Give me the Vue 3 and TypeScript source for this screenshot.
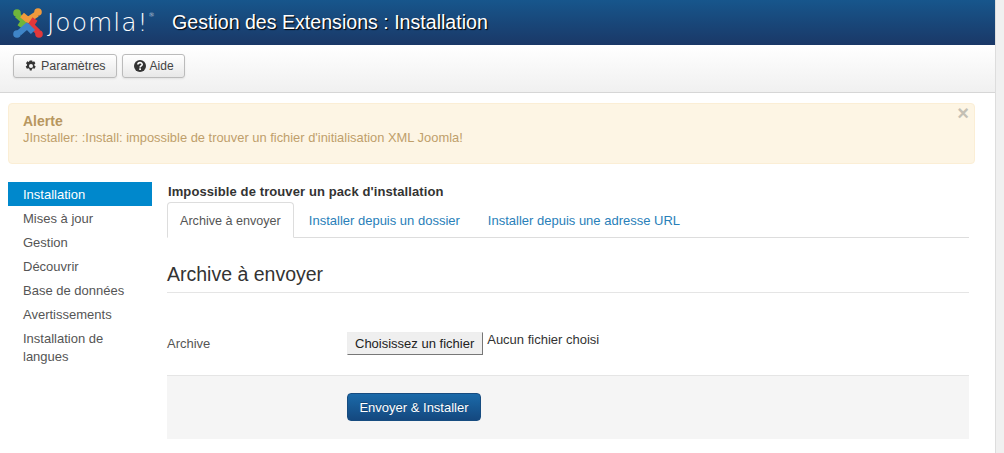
<script setup lang="ts">
import { ref } from 'vue'

const sideItems = ref(['Installation', 'Mises à jour', 'Gestion', 'Découvrir', 'Base de données', 'Avertissements', 'Installation de langues'])
const tabs = ref(['Archive à envoyer', 'Installer depuis un dossier', 'Installer depuis une adresse URL'])
</script>

<template>
  <div class="page">
    <div class="body-col">
      <header class="topbar">
        <div class="brand">
          <svg class="logo" viewBox="0 0 32 32" width="32" height="32">
            <path d="M5 8 L12 14 L8 20" fill="none" stroke="#6fb53c" stroke-width="6" stroke-linejoin="round" />
            <path d="M25 7 L16 13 L10 8" fill="none" stroke="#f09a3c" stroke-width="6" stroke-linejoin="round" />
            <path d="M26 25 L19 18 L23 12" fill="none" stroke="#e2383a" stroke-width="6" stroke-linejoin="round" />
            <path d="M7 26 L15 19 L21 25" fill="none" stroke="#3f85c8" stroke-width="6" stroke-linejoin="round" />
            <circle cx="5" cy="6" r="3.8" fill="#6fb53c" />
            <circle cx="26" cy="5" r="3.8" fill="#f09a3c" />
            <circle cx="27" cy="27" r="3.8" fill="#e2383a" />
            <circle cx="5" cy="27" r="3.8" fill="#3f85c8" />
          </svg>
          <span class="wordmark">Joomla!<sup>®</sup></span>
        </div>
        <h1 class="page-title">Gestion des Extensions : Installation</h1>
      </header>

      <div class="toolbar">
        <button class="tool-btn settings">
          <svg viewBox="0 0 12 12" width="12" height="12">
            <path fill-rule="evenodd" fill="#333" d="M4.8.4h2.4l.4 1.5 1.5-.6 1.3 2-1.1 1.1.1 1.2 1.3 1-1.2 2.2-1.6-.5-1 .8-.2 1.5H4.8l-.3-1.5-1-.8-1.6.5L.7 6.6 2 5.6l.1-1.2L1 3.3l1.3-2 1.5.6zM6 4a2 2 0 100 4 2 2 0 000-4z" />
          </svg>
          Paramètres
        </button>
        <button class="tool-btn help">
          <svg viewBox="0 0 12 12" width="12" height="12">
            <circle cx="6" cy="6" r="6" fill="#333" />
            <path d="M3.9 4.6c0-2.6 4.3-2.6 4.3-.1 0 1.4-2.1 1.5-2.1 2.9" fill="none" stroke="#fff" stroke-width="1.6" />
            <rect x="5.2" y="8.3" width="1.8" height="1.7" fill="#fff" />
          </svg>
          Aide
        </button>
      </div>

      <div class="alert">
        <span class="alert-close">×</span>
        <h4 class="alert-title">Alerte</h4>
        <p class="alert-text">JInstaller: :Install: impossible de trouver un fichier d'initialisation XML Joomla!</p>
      </div>

      <div class="main">
        <nav class="sidebar">
          <a v-for="(item, i) in sideItems" :key="item" class="side-link" :class="{ active: i === 0 }">{{ item }}</a>
        </nav>

        <section class="content">
          <div class="pack-title">Impossible de trouver un pack d'installation</div>
          <ul class="tabs">
            <li v-for="(tab, i) in tabs" :key="tab" class="tab" :class="{ active: i === 0 }">{{ tab }}</li>
          </ul>
          <h2 class="legend">Archive à envoyer</h2>
          <div class="field">
            <label class="field-label">Archive</label>
            <div class="file-input">
              <span class="file-btn">Choisissez un fichier</span>
              <span class="file-name">Aucun fichier choisi</span>
            </div>
          </div>
          <div class="actions">
            <button class="submit">Envoyer &amp; Installer</button>
          </div>
        </section>
      </div>
    </div>
    <div class="scrollbar"></div>
  </div>
</template>

<style>
html, body { margin: 0; background: #fff; overflow: hidden; }
</style>

<style scoped>
.page {
  display: flex;
  width: 1004px;
  height: 453px;
  overflow: hidden;
  font-family: "Liberation Sans", Arial, sans-serif;
  font-size: 13px;
  color: #555;
}
.body-col { width: 995px; flex: none; }
.topbar {
  height: 45px;
  display: flex;
  align-items: center;
  background: linear-gradient(#17568c, #1a3867);
}
.brand {
  display: flex;
  align-items: center;
  margin-left: 12px;
  width: 160px;
}
.logo { flex: none; }
.wordmark {
  margin-left: 3px;
  font-family: "DejaVu Sans", "Liberation Sans", sans-serif;
  font-size: 25px;
  font-weight: 200;
  color: #fff;
  letter-spacing: 1px;
  white-space: nowrap;
}
.wordmark sup { font-size: 6px; vertical-align: 14px; letter-spacing: 0; }
.page-title {
  margin: 0;
  font-size: 19.6px;
  font-weight: 400;
  color: #fff;
  text-shadow: 1px 1px 1px #000;
}
.toolbar {
  box-sizing: border-box;
  height: 48px;
  display: flex;
  align-items: flex-start;
  gap: 5px;
  padding: 9px 0 0 13px;
  background: linear-gradient(#fff, #f0f0f0);
  border-bottom: 1px solid #d6d6d6;
}
.tool-btn {
  height: 24px;
  display: flex;
  align-items: center;
  gap: 4px;
  padding: 0 10px 0 11px;
  font: inherit;
  color: #444;
  background: linear-gradient(#fff, #e8e8e8);
  border: 1px solid #bbb;
  border-radius: 3px;
  box-shadow: 0 1px 2px rgba(0, 0, 0, 0.08);
}
.tool-btn.settings { font-size: 12.5px; }
.tool-btn.help { font-size: 12px; }
.alert {
  position: relative;
  box-sizing: border-box;
  width: 967px;
  height: 61px;
  margin: 10px 0 0 8px;
  padding: 9px 14px;
  background: #fdf5e4;
  border: 1px solid #fbeed5;
  border-radius: 4px;
  color: #bf9f6b;
}
.alert-close {
  position: absolute;
  top: 0;
  right: 5px;
  font-size: 20px;
  font-weight: 700;
  line-height: 18px;
  color: #c4c0b4;
}
.alert-title { margin: 0; font-size: 14px; line-height: 16px; color: #b8975f; }
.alert-text { margin: 0; font-size: 12.9px; line-height: 18px; }
.main {
  display: flex;
  margin: 18px 0 0 8px;
}
.sidebar {
  width: 144px;
  flex: none;
  display: flex;
  flex-direction: column;
}
.side-link {
  padding: 4px 15px 2px;
  line-height: 18px;
  color: #555;
}
.side-link.active { background: #0088cc; color: #fff; }
.content {
  box-sizing: border-box;
  width: 802px;
  margin-left: 15px;
}
.pack-title {
  padding-left: 1px;
  font-size: 13px;
  font-weight: 700;
  letter-spacing: 0.1px;
  line-height: 19px;
  color: #333;
}
.tabs {
  display: flex;
  margin: 1px 0 0;
  padding: 0;
  list-style: none;
  border-bottom: 1px solid #ddd;
}
.tab {
  padding: 9px 13px 7px;
  line-height: 18px;
  color: #2980b9;
  margin-bottom: -1px;
  border: 1px solid transparent;
}
.tab.active {
  padding: 9px 12px 7px;
  margin-right: 1px;
  font-size: 12.6px;
  color: #555;
  background: #fff;
  border-color: #ddd #ddd #fff;
  border-radius: 4px 4px 0 0;
}
.legend {
  margin: 23px 0 0;
  padding-bottom: 4px;
  font-size: 19.5px;
  font-weight: 400;
  line-height: 27px;
  color: #333;
  border-bottom: 1px solid #e5e5e5;
}
.field {
  display: flex;
  align-items: center;
  margin-top: 39px;
  height: 22px;
}
.field-label { width: 180px; }
.file-input { display: flex; align-items: flex-start; gap: 4px; color: #333; }
.file-btn {
  padding: 2px 8px 2px 7px;
  line-height: 17px;
  background: #efefef;
  border: 1px solid;
  border-color: #eee #777 #777 #eee;
  color: #222;
}
.actions {
  box-sizing: border-box;
  height: 64px;
  margin-top: 21px;
  padding: 17px 0 0 180px;
  background: #f5f5f5;
  border-top: 1px solid #e5e5e5;
}
.submit {
  height: 28px;
  width: 134px;
  padding: 0;
  font: inherit;
  color: #fff;
  background: linear-gradient(#1b6aa9, #14487f);
  border: 1px solid #174c80;
  border-radius: 4px;
  text-shadow: 0 -1px 0 rgba(0, 0, 0, 0.25);
}
.scrollbar {
  flex: 1;
  background: #f0f0f0;
  border-left: 1px solid #ddd;
}
</style>
